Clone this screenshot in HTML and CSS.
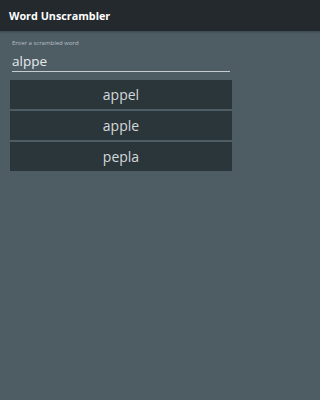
FILE: index.html
```html
<!DOCTYPE html>
<html>
<head>
<meta charset="utf-8">
<link rel="stylesheet" href="styles.css">
</head>
<body>
<header class="appbar">Word Unscrambler</header>
<main class="content">
  <div class="field">
    <label class="field-label">Enter a scrambled word</label>
    <div class="field-input">alppe</div>
  </div>
  <ul class="results">
    <li class="result">appel</li>
    <li class="result">apple</li>
    <li class="result">pepla</li>
  </ul>
</main>
</body>
</html>
```
FILE: styles.css
```css
html, body {
  margin: 0;
  padding: 0;
  height: 100%;
  background: #4e5c64;
}
body {
  font-family: "Open Sans", "DejaVu Sans", sans-serif;
  color: #d4d8da;
}
.appbar {
  height: 31px;
  box-sizing: border-box;
  padding: 0 9px;
  display: flex;
  align-items: center;
  background: #23292d;
  color: #ffffff;
  font-weight: 700;
  font-size: 10.8px;
  box-shadow: 0 1px 2px rgba(0,0,0,0.25);
}
.content {
  width: 242px;
  box-sizing: border-box;
  padding: 8px 10px 0 10px;
}
.field {
  padding: 0 2px;
}
.field-label {
  display: block;
  font-size: 6px;
  color: #b8c0c4;
  line-height: 8px;
}
.field-input {
  font-size: 13.5px;
  line-height: 18px;
  color: #e6eaec;
  padding-top: 5px;
  border-bottom: 1px solid #c4ccd0;
  height: 25px;
  box-sizing: border-box;
}
.results {
  list-style: none;
  margin: 8px 0 0 0;
  padding: 0;
  display: flex;
  flex-direction: column;
  gap: 2px;
}
.result {
  height: 29px;
  display: flex;
  align-items: center;
  justify-content: center;
  background: #2b363a;
  font-size: 14px;
  color: #d4d8da;
}
```
